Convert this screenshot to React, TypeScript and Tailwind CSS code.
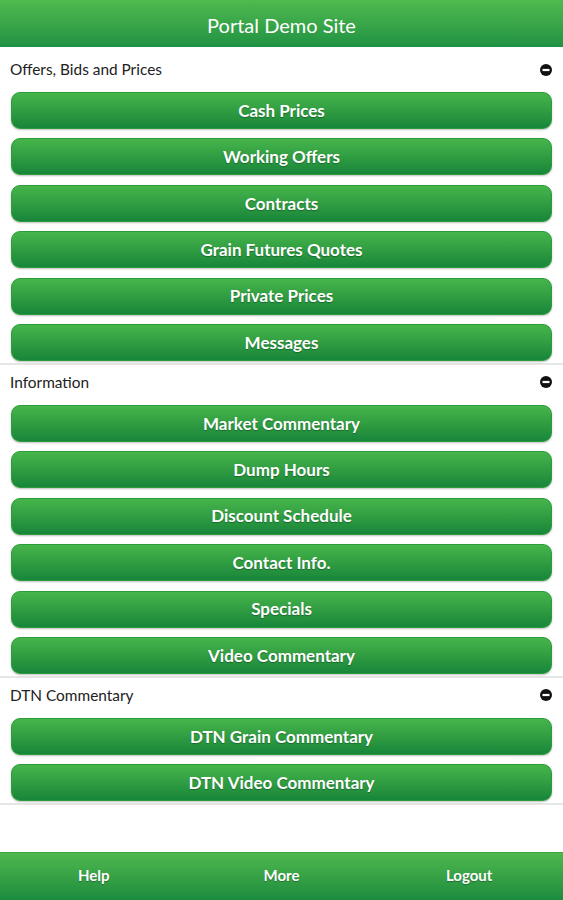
import React from "react";

const sections = [
  {
    title: "Offers, Bids and Prices",
    items: ["Cash Prices", "Working Offers", "Contracts", "Grain Futures Quotes", "Private Prices", "Messages"],
  },
  {
    title: "Information",
    items: ["Market Commentary", "Dump Hours", "Discount Schedule", "Contact Info.", "Specials", "Video Commentary"],
  },
  {
    title: "DTN Commentary",
    items: ["DTN Grain Commentary", "DTN Video Commentary"],
  },
];

const MinusIcon = () => (
  <svg width="12" height="12" viewBox="0 0 12 12">
    <circle cx="6" cy="6" r="6" fill="#111" />
    <rect x="2.5" y="4.9" width="7" height="2.2" fill="#fff" />
  </svg>
);

const App = () => {
  return (
    <div className="flex h-[900px] w-[563px] flex-col bg-white font-['Lato','Liberation_Sans',sans-serif]">
      <div className="flex h-[47px] shrink-0 items-center justify-center bg-gradient-to-b from-[#4fba4e] to-[#1e9243] pt-[3px] text-[20px] text-white">
        Portal Demo Site
      </div>

      <div className="flex-1 pt-[5px]">
        {sections.map((s) => (
          <div key={s.title} className="border-b-2 border-[#e6e6e6] pb-[2px]">
            <div className="flex h-[40px] items-center justify-between pb-[5px] pl-[10px] pr-[11px] text-[15.4px] text-[#222]">
              <span>{s.title}</span>
              <MinusIcon />
            </div>
            <div className="flex flex-col gap-[9.4px] px-[11px]">
              {s.items.map((item) => (
                <button
                  key={item}
                  className="flex h-[37px] items-center justify-center rounded-[9px] border border-[#2a9c3a] bg-gradient-to-b from-[#46b54a] to-[#16863a] text-[17px] font-bold text-white shadow-[0_1px_2px_rgba(0,0,0,0.25)] [text-shadow:0_1px_1px_rgba(0,0,0,0.3)]"
                >
                  {item}
                </button>
              ))}
            </div>
          </div>
        ))}
      </div>

      <div className="grid h-[48px] shrink-0 grid-cols-3 border-t border-[#3aa83f] bg-gradient-to-b from-[#4db84d] to-[#1a8c3e] text-[15px] font-bold text-white [text-shadow:0_1px_1px_rgba(0,0,0,0.3)]">
        <div className="flex items-center justify-center pb-[2px]">Help</div>
        <div className="flex items-center justify-center pb-[2px]">More</div>
        <div className="flex items-center justify-center pb-[2px]">Logout</div>
      </div>
    </div>
  );
};

export default App;
